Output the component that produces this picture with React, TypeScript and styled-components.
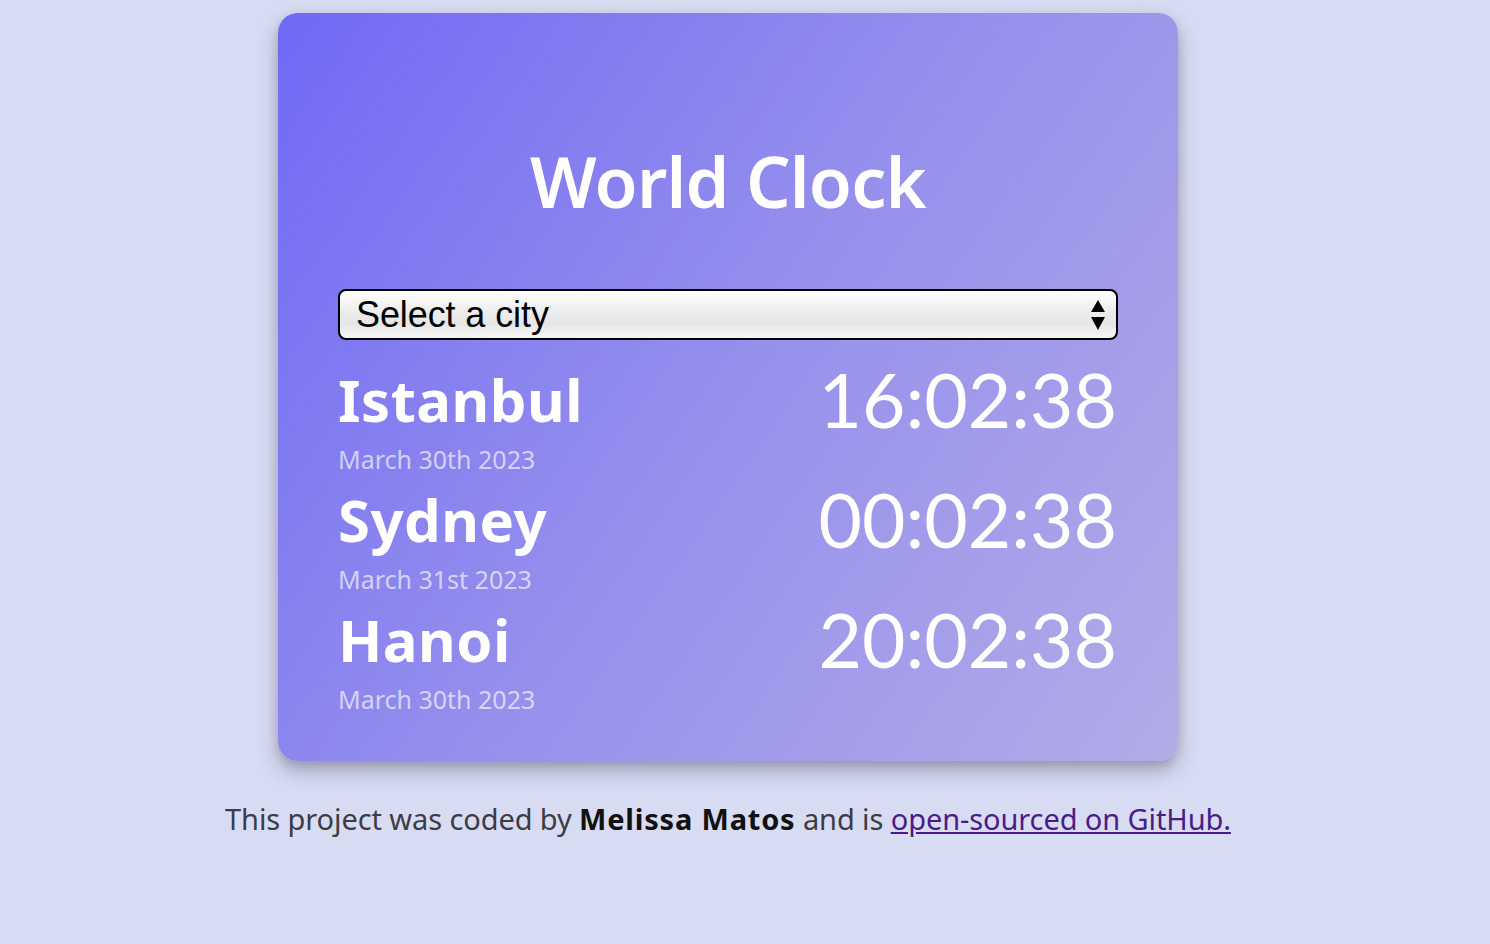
import React from "react";
import styled, { createGlobalStyle } from "styled-components";

const GlobalStyle = createGlobalStyle`
  html, body { margin: 0; padding: 0; }
  body {
    background: #d8dcf2;
    font-family: "Noto Sans", "Inter", sans-serif;
  }
`;

const Page = styled.div`
  display: flex;
  flex-direction: column;
  align-items: center;
  padding: 13px 34px 0 0;
`;

const Card = styled.main`
  box-sizing: border-box;
  width: 900px;
  height: 748px;
  border-radius: 20px;
  background: linear-gradient(125deg, #7069f6 0%, #9590ec 50%, #b2ace8 100%);
  box-shadow: 0 10px 20px rgba(60, 60, 90, 0.35), 0 4px 8px rgba(60, 60, 90, 0.15);
  padding: 133px 60px 0;
  display: flex;
  flex-direction: column;
`;

const Title = styled.h1`
  margin: 0;
  text-align: center;
  color: #fff;
  font-family: "Noto Sans", sans-serif;
  font-weight: 600;
  font-size: 70px;
  line-height: 1;
  letter-spacing: -0.8px;
`;

const SelectWrap = styled.div`
  position: relative;
  margin-top: 73px;
`;

const CitySelect = styled.select`
  appearance: none;
  -webkit-appearance: none;
  box-sizing: border-box;
  width: 100%;
  height: 51px;
  border: 2px solid #000;
  border-radius: 8px;
  background: linear-gradient(180deg, #ffffff 0%, #ececec 45%, #e6e6e6 70%, #f6f6f6 100%);
  color: #000;
  font-family: "Liberation Sans", Arial, sans-serif;
  font-size: 36px;
  letter-spacing: -0.1px;
  padding: 0 16px;
  outline: none;
`;

const Arrows = styled.svg`
  position: absolute;
  right: 12px;
  top: 50%;
  transform: translateY(-50%);
  pointer-events: none;
`;

const CityList = styled.div`
  display: flex;
  flex-direction: column;
  margin-top: 30px;
  gap: 12px;
`;

const CityRow = styled.div`
  display: flex;
  justify-content: space-between;
  align-items: flex-start;
  height: 108px;
`;

const CityInfo = styled.div`
  display: flex;
  flex-direction: column;
`;

const CityName = styled.h2`
  margin: 0;
  color: #fff;
  font-family: "Noto Sans", sans-serif;
  font-weight: 700;
  font-size: 58px;
  line-height: 60px;
  letter-spacing: 0.5px;
`;

const CityDate = styled.div`
  color: rgba(255, 255, 255, 0.65);
  font-family: "Noto Sans", sans-serif;
  font-size: 25px;
  line-height: 28px;
  margin-top: 15px;
`;

const Time = styled.div`
  color: #fff;
  font-family: "Lato", sans-serif;
  font-weight: 400;
  font-size: 75px;
  line-height: 76px;
  margin-top: -9px;
  margin-right: 1px;
`;

const Footer = styled.footer`
  margin-top: 38px;
  color: #3c3c44;
  font-family: "Noto Sans", sans-serif;
  font-size: 29px;
  letter-spacing: -0.1px;
`;

const Strong = styled.strong`
  color: #111;
  font-weight: 700;
  letter-spacing: 0.8px;
`;

const Link = styled.a`
  color: #4c1b8a;
`;

const cities = [
  { name: "Istanbul", date: "March 30th 2023", time: "16:02:38" },
  { name: "Sydney", date: "March 31st 2023", time: "00:02:38" },
  { name: "Hanoi", date: "March 30th 2023", time: "20:02:38" },
];

export default function App() {
  return (
    <>
      <GlobalStyle />
      <Page>
        <Card>
          <Title>World Clock</Title>
          <SelectWrap>
            <CitySelect defaultValue="">
              <option value="">Select a city</option>
              <option value="paris">Paris</option>
              <option value="tokyo">Tokyo</option>
            </CitySelect>
            <Arrows width="16" height="32" viewBox="0 0 16 32">
              <polygon points="8,1 15,13 1,13" fill="#000" />
              <polygon points="1,18 15,18 8,31" fill="#000" />
            </Arrows>
          </SelectWrap>
          <CityList>
            {cities.map((c) => (
              <CityRow key={c.name}>
                <CityInfo>
                  <CityName>{c.name}</CityName>
                  <CityDate>{c.date}</CityDate>
                </CityInfo>
                <Time>{c.time}</Time>
              </CityRow>
            ))}
          </CityList>
        </Card>
        <Footer>
          This project was coded by <Strong>Melissa Matos</Strong> and is{" "}
          <Link href="#">open-sourced on GitHub.</Link>
        </Footer>
      </Page>
    </>
  );
}
